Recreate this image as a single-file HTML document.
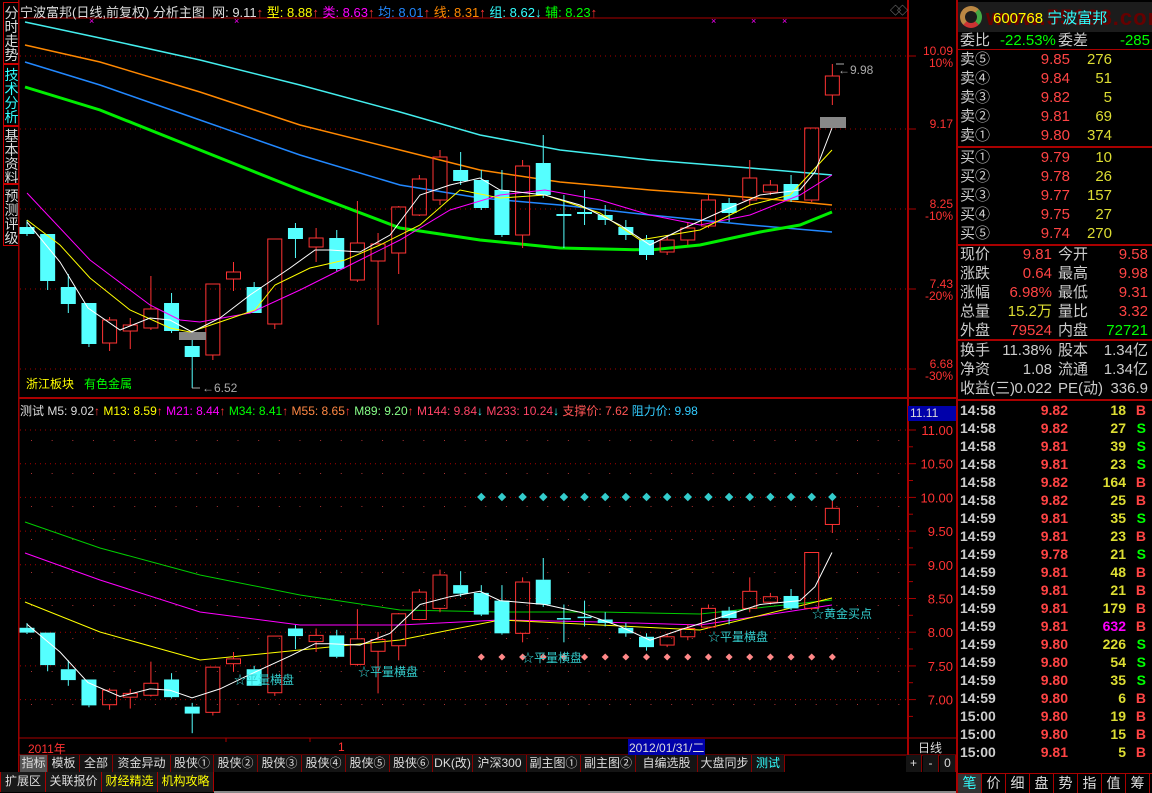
<!DOCTYPE html>
<html><head><meta charset="utf-8"><style>
*{margin:0;padding:0;box-sizing:border-box}
body{width:1152px;height:793px;background:#000;overflow:hidden;position:relative;font-family:"Liberation Sans","Noto Sans CJK SC",sans-serif;font-size:12px;color:#c0c0c0}
.a{position:absolute;white-space:nowrap}
#side{position:absolute;left:0;top:0;width:19px;height:772px;background:#000;border-right:1px solid #800}
.st{position:absolute;left:3px;width:16px;font-size:14px;line-height:14px;text-align:center;border:1px solid #c00;border-right:none;overflow:hidden}
.tab{position:absolute;top:755px;height:17px;font-size:12px;line-height:17px;border-right:1px solid #800;color:#ddd;text-align:center;background:#141414;white-space:nowrap;overflow:hidden}
.bt{position:absolute;top:772px;height:20px;font-size:12px;line-height:18px;border-right:1px solid #a00;color:#ddd;text-align:center;background:#1a1a1a;white-space:nowrap}
.bb{position:absolute;top:774px;height:19px;font-size:14px;line-height:19px;border-right:1px solid #a00;color:#ddd;text-align:center;width:24px}
</style></head><body>
<div id="side">
<div class="st" style="top:2px;height:62px;color:#ddd;padding-top:3px">分<br>时<br>走<br>势</div>
<div class="st" style="top:64px;height:62px;color:#3ff;padding-top:3px">技<br>术<br>分<br>析</div>
<div class="st" style="top:126px;height:58px;color:#ddd;padding-top:2px">基<br>本<br>资<br>料</div>
<div class="st" style="top:184px;height:62px;color:#ddd;padding-top:4px">预<br>测<br>评<br>级</div>
</div>
<svg id="ch" class="a" style="left:0;top:0" width="956" height="772"></svg>
<div class="a" style="left:20px;top:2px;font-size:13px;color:#ddd">宁波富邦(日线,前复权) 分析主图 &nbsp;网: 9.11<span style="color:#f33">↑</span> <span style="color:#ff0">型: 8.88</span><span style="color:#f33">↑</span> <span style="color:#f0f">类: 8.63</span><span style="color:#f33">↑</span> <span style="color:#28f">均: 8.01</span><span style="color:#f33">↑</span> <span style="color:#f80">线: 8.31</span><span style="color:#f33">↑</span> <span style="color:#3ff">组: 8.62</span><span style="color:#3ff">↓</span> <span style="color:#0f0">辅: 8.23</span><span style="color:#f33">↑</span></div>
<div class="a" style="left:20px;top:402px;font-size:12px;color:#ddd">测试 M5: 9.02<span style="color:#f33">↑</span> <span style="color:#ff0">M13: 8.59</span><span style="color:#f33">↑</span> <span style="color:#f0f">M21: 8.44</span><span style="color:#f33">↑</span> <span style="color:#0f0">M34: 8.41</span><span style="color:#f33">↑</span> <span style="color:#f84">M55: 8.65</span><span style="color:#f33">↑</span> <span style="color:#8f8">M89: 9.20</span><span style="color:#f33">↑</span> <span style="color:#f46">M144: 9.84</span><span style="color:#3ff">↓</span> <span style="color:#f46">M233: 10.24</span><span style="color:#3ff">↓</span> <span style="color:#f55">支撑价: 7.62</span> <span style="color:#3cf">阻力价: 9.98</span></div>
<div class="a" style="left:26px;top:375px;font-size:12px;color:#ff0">浙江板块 &nbsp;&nbsp;<span style="color:#0f0">有色金属</span></div>
<div class="a" style="left:908px;top:406px;width:48px;height:15px;background:#00a;color:#ddd;font-size:12px;line-height:15px;padding-left:2px">11.11</div>
<div class="a" style="left:28px;top:740px;color:#f33;font-size:12px">2011年</div>
<div class="a" style="left:338px;top:740px;color:#f33;font-size:12px">1</div>
<div class="a" style="left:628px;top:739px;background:#00a;color:#ddd;font-size:12px;padding:0 1px">2012/01/31/二</div>
<div class="a" style="left:918px;top:739px;color:#ddd;font-size:12px">日线</div>
<div class="tab" style="left:20px;width:28px;background:#555">指标</div>
<div class="tab" style="left:48px;width:32px">模板</div>
<div class="tab" style="left:80px;width:33px">全部</div>
<div class="tab" style="left:113px;width:58px">资金异动</div>
<div class="tab" style="left:171px;width:43px">股侠①</div>
<div class="tab" style="left:214px;width:44px">股侠②</div>
<div class="tab" style="left:258px;width:44px">股侠③</div>
<div class="tab" style="left:302px;width:44px">股侠④</div>
<div class="tab" style="left:346px;width:44px">股侠⑤</div>
<div class="tab" style="left:390px;width:43px">股侠⑥</div>
<div class="tab" style="left:433px;width:40px">DK(改)</div>
<div class="tab" style="left:473px;width:54px">沪深300</div>
<div class="tab" style="left:527px;width:54px">副主图①</div>
<div class="tab" style="left:581px;width:55px">副主图②</div>
<div class="tab" style="left:636px;width:62px">自编选股</div>
<div class="tab" style="left:698px;width:54px">大盘同步</div>
<div class="tab" style="left:752px;width:33px;color:#3ff">测试</div>
<div class="tab" style="left:906px;width:16px">+</div>
<div class="tab" style="left:923px;width:16px">-</div>
<div class="tab" style="left:940px;width:16px">0</div>
<div class="bt" style="left:0;width:46px;border-left:1px solid #a00">扩展区</div>
<div class="bt" style="left:46px;width:56px">关联报价</div>
<div class="bt" style="left:102px;width:56px;color:#ff0">财经精选</div>
<div class="bt" style="left:158px;width:56px;color:#ff0">机构攻略</div>
<div class="a" style="left:214px;top:791px;width:742px;height:2px;background:#888"></div>
<div class="a" style="left:956px;top:0;width:196px;height:793px;border-left:2px solid #a00"></div>
<div class="a" style="left:958px;top:2px;width:194px;height:30px;background:#1c1c1c"></div>
<div class="a" style="left:960px;top:6px;width:22px;height:22px;border-radius:50%;border:5px solid #b84;border-right-color:#4a4;border-bottom-color:#c33"></div>
<div class="a" style="left:986px;top:5px;font-size:22px;color:#600;font-weight:bold;letter-spacing:1px">www.55188.com</div>
<div class="a" style="left:993px;top:7px;font-size:15px;color:#ff0">600768 <span style="color:#3ff">宁波富邦</span></div>
<div class="a" style="left:960px;top:31px;width:190px;font-size:15px;line-height:19px"><span style="position:absolute;left:0;color:#ccc">委比</span><span style="position:absolute;left:40px;color:#0f0">-22.53%</span><span style="position:absolute;left:98px;color:#ccc">委差</span><span style="position:absolute;right:0;color:#0f0">-285</span></div>
<div class="a" style="left:958px;top:49px;width:194px;height:1px;background:#a00"></div>
<div class="a" style="left:958px;top:146px;width:194px;height:2px;background:#a00"></div>
<div class="a" style="left:958px;top:244px;width:194px;height:2px;background:#a00"></div>
<div class="a" style="left:958px;top:339px;width:194px;height:2px;background:#a00"></div>
<div class="a" style="left:958px;top:399px;width:194px;height:2px;background:#a00"></div>
<div id="rp2"></div>
<div class="bb" style="left:958px;color:#3ff;background:#333">笔</div>
<div class="bb" style="left:982px">价</div><div class="bb" style="left:1006px">细</div><div class="bb" style="left:1030px">盘</div><div class="bb" style="left:1054px">势</div><div class="bb" style="left:1078px">指</div><div class="bb" style="left:1102px">值</div><div class="bb" style="left:1126px">筹</div>
<div class="a" style="left:958px;top:773px;width:194px;height:1px;background:#a00"></div>
<script>
var svg=document.getElementById('ch'),h='';
function L(x1,y1,x2,y2,c,w,d){h+='<line x1="'+x1+'" y1="'+y1+'" x2="'+x2+'" y2="'+y2+'" stroke="'+c+'" stroke-width="'+(w||1)+'"'+(d?' stroke-dasharray="'+d+'"':'')+'/>';}
function T(x,y,s,c,fs,a){h+='<text x="'+x+'" y="'+y+'" fill="'+c+'" font-size="'+(fs||12)+'" font-family="Liberation Sans,Noto Sans CJK SC,sans-serif"'+(a?' text-anchor="'+a+'"':'')+'>'+s+'</text>';}
L(19,18,908,18,'#a00',1);L(19,398,956,398,'#a00',2);L(908,0,908,755,'#a00',2);L(19,738,956,738,'#a00',1);L(19,755,956,755,'#a00',1);
L(19,0,19,772,'#a00',1);
var ul=[[56,'10.09','10%'],[129,'9.17',''],[209,'8.25','-10%'],[289,'7.43','-20%'],[369,'6.68','-30%']];
ul.forEach(function(u){L(20,u[0],906,u[0],'#a00',1,'1 4');L(908,u[0],916,u[0],'#a00',1);T(953,u[0]-1,u[1],'#f33',12,'end');if(u[2])T(953,u[0]+11,u[2],'#f33',12,'end');});
T(890,14,'◇','#888',11);T(897,14,'◇','#888',11);
for(var i=0;i<9;i++){var p=11-i*0.5,y=430+i*0.5*67.4;L(20,y,906,y,'#a00',1,'1 4');L(908,y,916,y,'#a00',1);L(908,y+16.8,913,y+16.8,'#a00',1);T(953,y+5,p.toFixed(2),'#f33',13,'end');}
var P=[[56,10.09],[129,9.17],[209,8.25],[289,7.43],[369,6.68]];
function pr(y){var i=0;if(y<56)i=0;else if(y>=289)i=3;else{for(i=0;i<3;i++)if(y<P[i+1][0])break;}var a=P[i],b=P[i+1];return a[1]+(y-a[0])*(b[1]-a[1])/(b[0]-a[0]);}
function ly(y){return 430+(11-pr(y))*67.4;}
var C=[[227,234,220,236,'c'],[234,281,234,290,'c'],[287,304,274,313,'c'],[303,344,303,347,'c'],[320,343,317,351,'r'],[325,331,318,349,'r'],[309,328,276,330,'r'],[303,331,293,333,'c'],[346,357,340,388,'c'],[284,355,284,360,'r'],[272,279,262,291,'r'],[287,313,282,313,'c'],[239,324,239,329,'r'],[228,239,223,258,'c'],[238,247,228,262,'r'],[238,269,230,271,'c'],[243,280,201,282,'r'],[244,261,233,325,'r'],[207,253,206,274,'r'],[179,215,175,216,'r'],[157,200,150,205,'r'],[170,181,152,185,'c'],[180,208,170,210,'c'],[190,235,170,237,'c'],[166,235,160,248,'r'],[163,195,135,198,'c'],[214,216,195,248,'c'],[212,214,190,225,'c'],[215,220,205,225,'c'],[227,235,220,240,'c'],[240,255,235,260,'c'],[240,252,235,255,'r'],[228,240,222,245,'r'],[200,226,195,228,'r'],[203,213,198,222,'c'],[178,200,160,205,'r'],[185,192,180,195,'r'],[184,200,175,202,'c'],[128,200,128,202,'r'],[76,95,64,105,'r']];
function cand(x,t,b,wt,wb,c){var col=c=='r'?'#f33':'#5ff';L(x,wt,x,t,col,1);L(x,b,x,wb,col,1);if(b-t<1.5){L(x-7,t,x+7,t,col,1.5);return;}if(c=='r')h+='<rect x="'+(x-7)+'" y="'+t+'" width="14" height="'+(b-t)+'" fill="none" stroke="#f33"/>';else h+='<rect x="'+(x-7.5)+'" y="'+t+'" width="15" height="'+(b-t)+'" fill="#5ff"/>';}
function pl(pts,c,w,low){var s=pts.map(function(p){return p[0]+','+(low?ly(p[1]):p[1]).toFixed(1);}).join(' ');h+='<polyline points="'+s+'" fill="none" stroke="'+c+'" stroke-width="'+w+'"/>';}
var cy=[[25,22],[100,38],[200,60],[300,85],[400,112],[480,135],[560,150],[650,160],[750,168],[832,175]];
var or=[[25,45],[100,62],[200,92],[300,125],[400,150],[480,170],[560,182],[650,190],[720,195],[780,200],[832,205]];
var bl=[[25,62],[100,85],[200,120],[300,155],[400,185],[480,198],[560,205],[650,215],[750,225],[832,232]];
var gr=[[25,87],[100,110],[200,150],[300,190],[400,228],[480,240],[560,248],[650,250],[700,245],[760,232],[800,225],[832,212]];
var mg=[[27,193],[90,260],[150,305],[180,320],[200,322],[250,313],[300,290],[350,265],[400,240],[450,210],[500,195],[545,190],[600,200],[650,215],[700,225],[750,215],[800,195],[832,175]];
var ye=[[27,220],[60,245],[90,278],[130,310],[170,328],[190,332],[220,322],[255,310],[275,285],[310,268],[345,260],[380,245],[420,225],[460,190],[500,198],[545,195],[600,213],[640,240],[700,230],[750,205],[790,195],[832,150]];
var wh=[[27,222],[60,262],[88,308],[120,330],[150,318],[170,320],[192,332],[220,318],[250,295],[290,268],[315,250],[330,250],[360,252],[390,235],[420,195],[450,185],[480,178],[500,190],[545,195],[580,205],[620,225],[650,245],[680,230],[720,212],[760,195],[800,190],[815,172],[832,128]];
pl(cy,'#4ee',1.5);pl(or,'#f80',1.5);pl(bl,'#28f',1.5);pl(gr,'#0e0',3);
for(var x=27;x<900;x+=20.65){for(var y=440;y<735;y+=33){h+='<rect x="'+(x+4)+'" y="'+y+'" width="1" height="1" fill="#a33"/>';}}
function pd(pts,c,w){h+='<polyline points="'+pts.map(function(p){return p.join(',')}).join(' ')+'" fill="none" stroke="'+c+'" stroke-width="'+w+'"/>';}
pd([[25,522],[100,548],[200,575],[300,595],[400,610],[500,612],[600,612],[700,614],[832,600]],'#0c0',1);
pd([[25,553],[100,580],[200,612],[300,625],[400,625],[500,620],[600,622],[700,625],[832,605]],'#f0f',1);
pd([[25,602],[100,632],[200,660],[300,650],[400,640],[500,620],[600,625],[700,630],[832,598]],'#ff0',1);
C.forEach(function(c,i){cand(27+i*20.65,c[0],c[1],c[2],c[3],c[4]);});
C.forEach(function(c,i){cand(27+i*20.65,ly(c[0]),ly(c[1]),ly(c[2]),ly(c[3]),c[4]);});
h+='<rect x="179" y="332" width="27" height="8" fill="#888"/><rect x="820" y="117" width="26" height="11" fill="#888"/>';
pl(mg,'#f0f',1);pl(ye,'#ff0',1);pl(wh,'#fff',1);
pl(wh,'#fff',1,true);
L(192,388,200,388,'#aaa',1);T(202,392,'←6.52','#aaa',12);T(838,74,'←9.98','#aaa',12);L(836,64,844,64,'#aaa',1);
for(var i=22;i<40;i++){var x=27+i*20.65;h+='<rect x="'+(x-3)+'" y="494" width="6" height="6" transform="rotate(45 '+x+' 497)" fill="#3cc"/><rect x="'+(x-2.5)+'" y="654.5" width="5" height="5" transform="rotate(45 '+x+' 657)" fill="#f88"/>';}
T(234,684,'☆平量横盘','#3cc',12);T(358,676,'☆平量横盘','#3cc',12);T(522,662,'☆平量横盘','#3cc',12);T(708,641,'☆平量横盘','#3cc',12);T(812,618,'☆黄金买点','#3cc',12);
[89,234,711,751,782].forEach(function(x){T(x,24,'×','#f0f',9);});
L(226,738,226,742,'#a00');L(310,738,310,742,'#a00');
svg.innerHTML=h;
var R='';
function row(y,a,b,bc,c,d,dc,fs){R+='<div class="a" style="left:960px;top:'+y+'px;width:190px;font-size:'+(fs||15)+'px;line-height:19px"><span style="position:absolute;left:0;color:#ccc">'+a+'</span><span style="position:absolute;right:'+(c!==null?98:80)+'px;color:'+bc+'">'+b+'</span>'+(c!==null?'<span style="position:absolute;left:98px;color:#ccc">'+c+'</span>':'')+'<span style="position:absolute;right:'+(c!==null?2:38)+'px;color:'+dc+'">'+d+'</span></div>';}
var s=[['卖⑤','9.85','276'],['卖④','9.84','51'],['卖③','9.82','5'],['卖②','9.81','69'],['卖①','9.80','374']];
s.forEach(function(r,i){row(50+i*19,r[0],r[1],'#f44',null,r[2],'#dd3');});
var b=[['买①','9.79','10'],['买②','9.78','26'],['买③','9.77','157'],['买④','9.75','27'],['买⑤','9.74','270']];
b.forEach(function(r,i){row(148+i*19,r[0],r[1],'#f44',null,r[2],'#dd3');});
var q=[['现价','9.81','#f44','今开','9.58','#f44'],['涨跌','0.64','#f44','最高','9.98','#f44'],['涨幅','6.98%','#f44','最低','9.31','#f44'],['总量','15.2万','#dd3','量比','3.32','#f44'],['外盘','79524','#f44','内盘','72721','#0f0']];
q.forEach(function(r,i){row(245+i*19,r[0],r[1],r[2],r[3],r[4],r[5]);});
var z=[['换手','11.38%','股本','1.34亿'],['净资','1.08','流通','1.34亿'],['收益(三)','0.022','PE(动)','336.9']];
z.forEach(function(r,i){row(341+i*19,r[0],r[1],'#ccc',r[2],r[3],'#ccc');});
var tk=[['14:58','9.82','18','B'],['14:58','9.82','27','S'],['14:58','9.81','39','S'],['14:58','9.81','23','S'],['14:58','9.82','164','B'],['14:58','9.82','25','B'],['14:59','9.81','35','S'],['14:59','9.81','23','B'],['14:59','9.78','21','S'],['14:59','9.81','48','B'],['14:59','9.81','21','B'],['14:59','9.81','179','B'],['14:59','9.81','632','B'],['14:59','9.80','226','S'],['14:59','9.80','54','S'],['14:59','9.80','35','S'],['14:59','9.80','6','B'],['15:00','9.80','19','B'],['15:00','9.80','15','B'],['15:00','9.81','5','B']];
tk.forEach(function(r,i){var y=401+i*18;R+='<div class="a" style="left:960px;top:'+y+'px;width:190px;font-size:14px;line-height:18px;font-weight:bold"><span style="position:absolute;left:0;color:#ccc">'+r[0]+'</span><span style="position:absolute;right:82px;color:#f44">'+r[1]+'</span><span style="position:absolute;right:24px;color:'+(r[2]=='632'?'#f0f':'#dd3')+'">'+r[2]+'</span><span style="position:absolute;right:4px;color:'+(r[3]=='B'?'#f44':'#0f0')+'">'+r[3]+'</span></div>';});
document.getElementById('rp2').innerHTML=R;
</script>
</body></html>
